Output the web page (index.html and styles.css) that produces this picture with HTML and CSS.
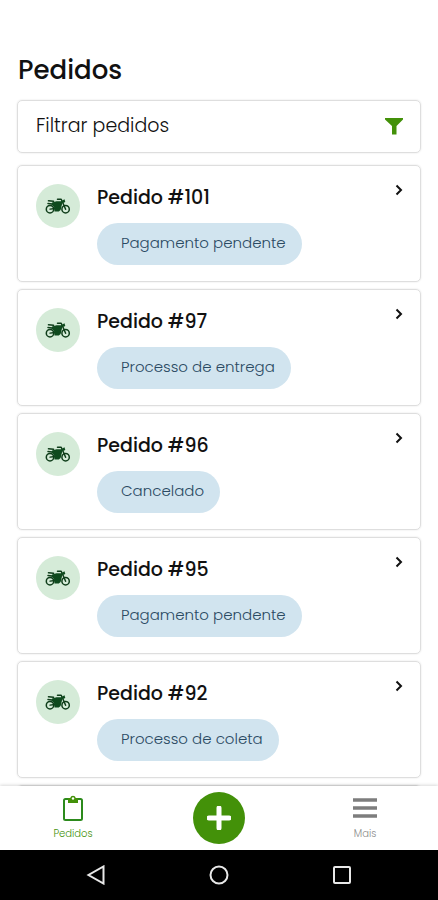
FILE: index.html
```html
<!DOCTYPE html>
<html lang="pt-BR">
<head>
    <meta charset="UTF-8">
    <meta name="viewport" content="width=device-width, initial-scale=1">
    <title>Pedidos</title>
    <link rel="stylesheet" href="styles.css">
</head>
<body>
<svg class="sprite" aria-hidden="true">
    <symbol id="moto" viewBox="0 0 26 17">
        <g fill="none" stroke="#0f3d1a" stroke-linecap="round" stroke-linejoin="round">
            <circle cx="5" cy="11.2" r="3.7" stroke-width="1.5"/>
            <circle cx="20.6" cy="11.2" r="3.7" stroke-width="1.5"/>
            <path d="M12.5 1.2h3.7l1.4 3 3 7" stroke-width="1.5"/>
            <path d="M5 11.2l5-.7" stroke-width="1.3"/>
            <path d="M3.5 2.8l5 .5" stroke-width="1.6"/>
            <path d="M3 5.5l4 .5" stroke-width="1.5"/>
        </g>
        <path d="M7 4.5l4.5-1.3h4.5l3.5-2 .8 2.800-3 1.200-1.700 6.800-1.800 1.500H9.500L9 9 6.500 6.500z" fill="#0f4a1e"/>
    </symbol>
    <symbol id="chevron" viewBox="0 0 8 12">
        <path d="M1.5 1.5L6 6l-4.5 4.5" fill="none" stroke="#111" stroke-width="2"/>
    </symbol>
</svg>

<main class="content">
    <h1 class="title">Pedidos</h1>

    <button class="filter" type="button">
        <span>Filtrar pedidos</span>
        <svg class="funnel" viewBox="0 0 20 18" aria-hidden="true"><path d="M1 1h18v1.5L12.500 9v8.500h-4.500V9L1 2.500z" fill="#439109"/></svg>
    </button>

    <div class="orders">
        <a class="order" href="#101">
            <span class="avatar"><svg class="moto"><use href="#moto"/></svg></span>
            <span class="info">
                <strong class="name">Pedido #101</strong>
                <span class="status">Pagamento pendente</span>
            </span>
            <svg class="chevron"><use href="#chevron"/></svg>
        </a>
        <a class="order" href="#97">
            <span class="avatar"><svg class="moto"><use href="#moto"/></svg></span>
            <span class="info">
                <strong class="name">Pedido #97</strong>
                <span class="status">Processo de entrega</span>
            </span>
            <svg class="chevron"><use href="#chevron"/></svg>
        </a>
        <a class="order" href="#96">
            <span class="avatar"><svg class="moto"><use href="#moto"/></svg></span>
            <span class="info">
                <strong class="name">Pedido #96</strong>
                <span class="status">Cancelado</span>
            </span>
            <svg class="chevron"><use href="#chevron"/></svg>
        </a>
        <a class="order" href="#95">
            <span class="avatar"><svg class="moto"><use href="#moto"/></svg></span>
            <span class="info">
                <strong class="name">Pedido #95</strong>
                <span class="status">Pagamento pendente</span>
            </span>
            <svg class="chevron"><use href="#chevron"/></svg>
        </a>
        <a class="order" href="#92">
            <span class="avatar"><svg class="moto"><use href="#moto"/></svg></span>
            <span class="info">
                <strong class="name">Pedido #92</strong>
                <span class="status">Processo de coleta</span>
            </span>
            <svg class="chevron"><use href="#chevron"/></svg>
        </a>
        <div class="order"></div>
    </div>
</main>

<nav class="tabs">
    <a class="tab active" href="#pedidos">
        <svg class="tab-icon" viewBox="0 0 24 28" aria-hidden="true">
            <rect x="3" y="4" width="18" height="21" rx="1.5" fill="none" stroke="#2c8a1c" stroke-width="2"/>
            <path d="M7 3h2.2a2.9 2.9 0 0 1 5.6 0H17v5H7z" fill="#439109"/>
            <circle cx="12" cy="3.5" r="1.2" fill="#fff"/>
        </svg>
        <span>Pedidos</span>
    </a>
    <button class="add" type="button" aria-label="Novo pedido">
        <svg class="plus" viewBox="0 0 24 24" aria-hidden="true"><path d="M12 2v20M2 12h20" stroke="#fff" stroke-width="5" stroke-linecap="round"/></svg>
    </button>
    <a class="tab" href="#mais">
        <svg class="tab-icon" viewBox="0 0 24 28" aria-hidden="true"><path d="M0 5h24M0 13h24M0 21h24" stroke="#7d7d7d" stroke-width="3.5"/></svg>
        <span>Mais</span>
    </a>
</nav>

<div class="system">
    <button type="button" aria-label="Voltar"><svg viewBox="0 0 20 20"><path d="M17.5 1.5v17L2.5 10z"/></svg></button>
    <button type="button" aria-label="Início"><svg viewBox="0 0 20 20"><circle cx="10" cy="10" r="8.5"/></svg></button>
    <button type="button" aria-label="Recentes"><svg viewBox="0 0 20 20"><rect x="2" y="2" width="16" height="16" rx="1"/></svg></button>
</div>
</body>
</html>
```
FILE: styles.css
```css
*{ box-sizing:border-box; margin:0; padding:0;}
body{ display:flex; flex-direction:column; height:100vh; background:#fff; color:#111; font-family:Poppins, Inter, sans-serif;}
a{ color:inherit; text-decoration:none;}
button{ border:none; background:none; color:inherit; font-family:inherit; cursor:pointer;}
svg{ display:block; flex:none;}
.sprite{ position:absolute; width:0; height:0;}

.content{ flex:1; min-height:0; overflow:hidden; padding:52px 17px 0;}
.title{ padding-left:1px; font-size:26px; line-height:36px; font-weight:500;}
.filter{ display:flex; align-items:center; justify-content:space-between; width:100%; height:53px; margin-top:12px; padding:0 16px 2px 18px; border:1px solid #dedede; border-radius:5px; box-shadow:0 0 2px rgba(0,0,0,.12); font-size:19px; font-weight:300; text-align:left;}
.funnel{ width:20px; height:18px;}

.orders{ display:flex; flex-direction:column; gap:7px; margin-top:12px;}
.order{ display:flex; align-items:flex-start; gap:17px; min-height:117px; padding:18px 17px 0 18px; border:1px solid #dedede; border-radius:5px; box-shadow:0 0 2px rgba(0,0,0,.12);}
.avatar{ display:flex; align-items:center; justify-content:center; width:44px; height:44px; border-radius:50%; background:#d5ebd8;}
.moto{ width:26px; height:17px;}
.info{ flex:1; display:flex; flex-direction:column; align-items:flex-start; gap:11px;}
.name{ font-size:19px; line-height:28px; font-weight:500;}
.status{ padding:0 16px 2px 24px; border-radius:21px; background:#d1e4ef; color:#2b4a63; font-size:15px; line-height:40px; font-weight:300;}
.chevron{ width:8px; height:12px;}

.tabs{ display:grid; grid-template-columns:1fr 1fr 1fr; align-items:center; justify-items:center; height:64px; background:#fff; box-shadow:0 -1px 3px rgba(0,0,0,.15);}
.tab{ display:flex; flex-direction:column; align-items:center; gap:4px; color:#8c8c8c; font-size:10px; line-height:14px; font-weight:300;}
.tab.active{ color:#439109;}
.tab-icon{ width:24px; height:28px;}
.add{ display:flex; align-items:center; justify-content:center; width:52px; height:52px; border-radius:50%; background:#439109;}
.plus{ width:24px; height:24px;}

.system{ display:grid; grid-template-columns:1fr 1fr 1fr; justify-items:center; align-items:center; height:50px; padding:0 35px; background:#000;}
.system svg{ width:20px; height:20px; fill:none; stroke:#e8e8e8; stroke-width:2;}
```
